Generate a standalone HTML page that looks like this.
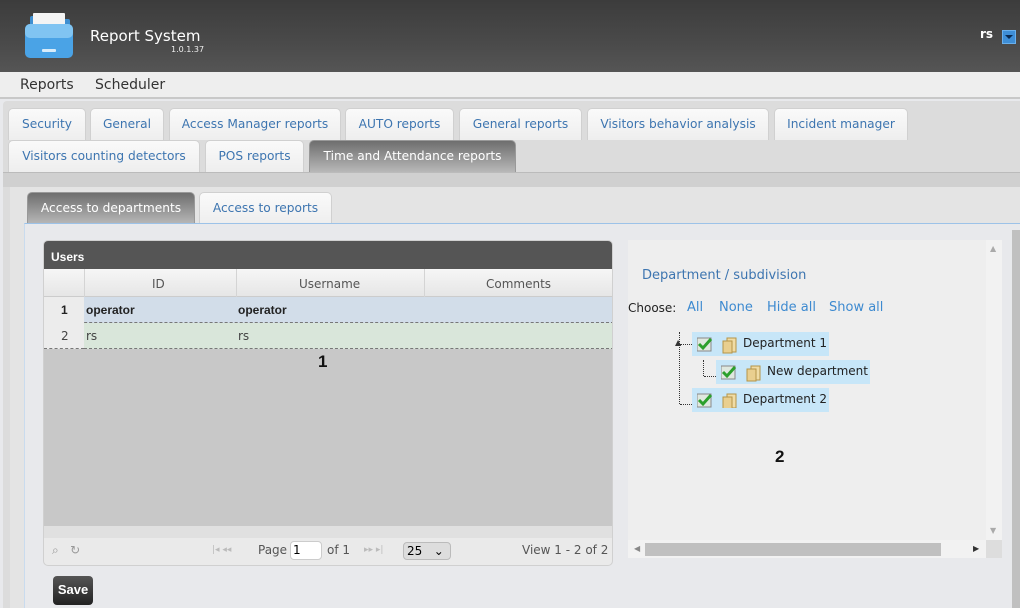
<!DOCTYPE html>
<html><head><meta charset="utf-8"><style>
*{box-sizing:border-box;margin:0;padding:0}
body{width:1020px;height:608px;overflow:hidden;font-family:"DejaVu Sans","Liberation Sans",sans-serif;background:#e8e9ec;position:relative}
.a{position:absolute}
.hdr{left:0;top:0;width:1020px;height:72px;background:linear-gradient(#3c3c3c,#4a4a4a 60%,#555)}
.menu{left:0;top:72px;width:1020px;height:27px;background:#eeeeee;border-bottom:2px solid #c8c8c8;font-size:14px;color:#333}
.tabarea{left:3px;top:101px;width:1017px;height:507px;background:#dcdcdc;border-radius:4px 0 0 0}
.tab{position:absolute;height:32px;background:linear-gradient(#fafafa,#eeeeee);border:1px solid #d0d0d0;border-bottom:none;border-radius:5px 5px 0 0;color:#3d75b0;font-size:12.2px;line-height:31px;text-align:center;white-space:nowrap}
.tab.sel{background:linear-gradient(#6e6e6e,#b8b8b8);color:#fff;border-color:#999}
.band{left:3px;top:172px;width:1017px;height:15px;background:#d0d0d0;border-top:1px solid #bbb}
.inner{left:10px;top:187px;width:1010px;height:421px;background:#e4e4e4}
.content{left:24px;top:223px;width:996px;height:385px;background:#e8e9ec;border-top:1px solid #9cc2e8;border-left:1px solid #c9dbee}
.t{position:absolute;font-size:12px;color:#222;white-space:nowrap}
</style></head><body>
<div class="a hdr"></div>
<svg class="a" style="left:24px;top:12px" width="50" height="48"><path d="M6 12 L6 6 Q6 4 8 4 L20 4 L22 7 L44 7 Q46 7 46 9 L46 14Z" fill="#3f8fd0"/><rect x="9" y="1" width="32" height="13" fill="#f4f4f4" rx="1"/><rect x="1" y="12" width="48" height="34" rx="5" fill="#4aa3e6"/><rect x="1" y="12" width="48" height="14" rx="5" fill="#80c4f2"/><rect x="18" y="37" width="14" height="3" rx="1" fill="#d8ecfa"/></svg>
<div class="t" style="left:90px;top:27px;font-size:15px;color:#fff">Report System</div>
<div class="t" style="left:171px;top:45px;font-size:8px;color:#eee">1.0.1.37</div>
<div class="t" style="left:980px;top:27px;font-size:12px;color:#fff;font-weight:bold">rs</div>
<div class="a" style="left:1002px;top:30px;width:14px;height:14px;background:#3e8ed6;border:1px solid #6ab0ec"></div>
<div class="a" style="left:1005px;top:35px;width:0;height:0;border:4px solid transparent;border-top:4px solid #0a2a50"></div>
<div class="a menu"><span class="a" style="left:20px;top:5px">Reports</span><span class="a" style="left:95px;top:5px">Scheduler</span></div>
<div class="a tabarea"></div>
<div class="tab" style="left:8px;top:108px;width:78px">Security</div>
<div class="tab" style="left:90px;top:108px;width:74px">General</div>
<div class="tab" style="left:169px;top:108px;width:172px">Access Manager reports</div>
<div class="tab" style="left:345px;top:108px;width:109px">AUTO reports</div>
<div class="tab" style="left:459px;top:108px;width:123px">General reports</div>
<div class="tab" style="left:587px;top:108px;width:182px">Visitors behavior analysis</div>
<div class="tab" style="left:774px;top:108px;width:134px">Incident manager</div>
<div class="tab" style="left:8px;top:140px;width:192px">Visitors counting detectors</div>
<div class="tab" style="left:205px;top:140px;width:99px">POS reports</div>
<div class="tab sel" style="left:309px;top:140px;width:207px">Time and Attendance reports</div>
<div class="a band"></div>
<div class="a inner"></div>
<div class="tab sel" style="left:27px;top:192px;width:168px">Access to departments</div>
<div class="tab" style="left:199px;top:192px;width:133px">Access to reports</div>
<div class="a content"></div>
<div class="a" style="left:1012px;top:230px;width:8px;height:378px;background:#c0c0c0"></div>
<!-- grid -->
<div class="a" style="left:43px;top:240px;width:570px;height:326px;background:#eaeaea;border:1px solid #d0d0d0;border-radius:5px;overflow:hidden">
 <div class="a" style="left:0;top:0;width:570px;height:28px;background:#555"></div>
 <div class="t" style="left:7px;top:9px;color:#fff;font-weight:bold;font-family:'Liberation Sans',sans-serif">Users</div>
 <div class="a" style="left:0;top:28px;width:570px;height:28px;background:linear-gradient(#f6f6f6,#e6e6e6);border-bottom:1px solid #ccc"></div>
 <div class="a" style="left:40px;top:28px;width:1px;height:28px;background:#d4d4d4"></div>
 <div class="a" style="left:192px;top:28px;width:1px;height:28px;background:#d4d4d4"></div>
 <div class="a" style="left:380px;top:28px;width:1px;height:28px;background:#d4d4d4"></div>
 <div class="t" style="left:108px;top:36px;color:#555">ID</div>
 <div class="t" style="left:255px;top:36px;color:#555">Username</div>
 <div class="t" style="left:442px;top:36px;color:#555">Comments</div>
 <div class="a" style="left:0;top:56px;width:570px;height:26px;background:#d2dde9;border-bottom:1px dashed #777"></div>
 <div class="a" style="left:0;top:56px;width:40px;height:52px;background:#ececec"></div>
 <div class="a" style="left:40px;top:82px;width:530px;height:26px;background:#d9e6da;border-bottom:1px dashed #777"></div>
 <div class="a" style="left:0;top:82px;width:40px;height:26px;border-bottom:1px dashed #777"></div>
 <div class="t" style="left:17px;top:62px;font-weight:bold;font-family:'Liberation Sans',sans-serif">1</div>
 <div class="t" style="left:42px;top:62px;font-weight:bold;font-family:'Liberation Sans',sans-serif">operator</div>
 <div class="t" style="left:194px;top:62px;font-weight:bold;font-family:'Liberation Sans',sans-serif">operator</div>
 <div class="t" style="left:17px;top:88px;color:#444">2</div>
 <div class="t" style="left:42px;top:88px;color:#444">rs</div>
 <div class="t" style="left:194px;top:88px;color:#444">rs</div>
 <div class="a" style="left:0;top:108px;width:570px;height:177px;background:#c8c8c8"></div>
 <div class="t" style="left:274px;top:111px;font-size:17px;font-weight:bold;color:#111;font-family:'Liberation Sans',sans-serif">1</div>
 <div class="a" style="left:0;top:285px;width:570px;height:12px;background:#e0e0e0"></div>
 <div class="t" style="left:8px;top:302px;color:#999">⌕ &nbsp; ↻</div>
 <div class="t" style="left:168px;top:304px;color:#bbb;font-size:9px">|◂ ◂◂</div>
 <div class="t" style="left:214px;top:302px;color:#555">Page</div>
 <div class="a" style="left:246px;top:300px;width:32px;height:19px;background:#fff;border:1px solid #ccc;border-radius:4px;font-size:12px;padding-left:2px;line-height:17px">1</div>
 <div class="t" style="left:283px;top:302px;color:#555">of 1</div>
 <div class="t" style="left:320px;top:304px;color:#bbb;font-size:9px">▸▸ ▸|</div>
 <div class="a" style="left:359px;top:301px;width:48px;height:18px;background:#ddd;border:1px solid #bbb;border-radius:4px;font-size:12px;padding-left:3px;line-height:16px">25 &nbsp;&nbsp;⌄</div>
 <div class="t" style="left:478px;top:302px;color:#555">View 1 - 2 of 2</div>
</div>
<div class="a" style="left:53px;top:576px;width:40px;height:29px;background:linear-gradient(#555,#222);border-radius:4px;color:#fff;font-weight:bold;font-size:13px;text-align:center;line-height:28px;font-family:'Liberation Sans',sans-serif">Save</div>
<!-- right panel -->
<div class="a" style="left:628px;top:240px;width:374px;height:318px;background:#eeeeee"></div>
<div class="a" style="left:986px;top:240px;width:16px;height:300px;background:#f2f2f2"></div>
<div class="t" style="left:990px;top:244px;font-size:8px;color:#aaa">▲</div>
<div class="t" style="left:990px;top:526px;font-size:8px;color:#aaa">▼</div>
<div class="a" style="left:628px;top:540px;width:358px;height:18px;background:#f2f2f2"></div>
<div class="a" style="left:645px;top:543px;width:296px;height:13px;background:#c0c0c0"></div>
<div class="a" style="left:986px;top:540px;width:16px;height:18px;background:#ddd"></div>
<div class="t" style="left:634px;top:544px;font-size:8px;color:#888">◀</div>
<div class="t" style="left:973px;top:544px;font-size:8px;color:#333">▶</div>
<div class="t" style="left:642px;top:268px;font-size:13px;color:#3d75b0">Department / subdivision</div>
<div class="t" style="left:628px;top:301px;color:#222">Choose:</div>
<div class="t" style="left:687px;top:300px;font-size:13px;color:#3d8ad0">All</div>
<div class="t" style="left:719px;top:300px;font-size:13px;color:#3d8ad0">None</div>
<div class="t" style="left:767px;top:300px;font-size:13px;color:#3d8ad0">Hide all</div>
<div class="t" style="left:829px;top:300px;font-size:13px;color:#3d8ad0">Show all</div>
<div class="a" style="left:679px;top:332px;width:1px;height:72px;border-left:1px dotted #333"></div>
<div class="a" style="left:680px;top:344px;width:12px;border-top:1px dotted #333"></div>
<div class="a" style="left:680px;top:404px;width:12px;border-top:1px dotted #333"></div>
<div class="a" style="left:703px;top:360px;width:1px;height:16px;border-left:1px dotted #333"></div>
<div class="a" style="left:704px;top:376px;width:12px;border-top:1px dotted #333"></div>
<div class="t" style="left:675px;top:338px;font-size:8px;color:#333">▲</div>
<div class="a" style="left:692px;top:332px;width:137px;height:24px;background:#c7e6f8"></div>
<div class="a" style="left:716px;top:360px;width:154px;height:24px;background:#c7e6f8"></div>
<div class="a" style="left:692px;top:388px;width:137px;height:24px;background:#c7e6f8"></div>
<svg class="a" style="left:697px;top:336px" width="40" height="72"><g id="ck"><rect x="0" y="2" width="14" height="13" fill="#dfe8df" stroke="#888"/><path d="M2 8l4 4 8-9" stroke="#2ca02c" stroke-width="3" fill="none"/><rect x="30" y="2" width="9" height="14" fill="#f0dca5" stroke="#b59448"/><rect x="26" y="5" width="9" height="12" fill="#e9cf8f" stroke="#b59448"/></g><use href="#ck" y="56"/></svg>
<svg class="a" style="left:721px;top:364px" width="40" height="18"><rect x="0" y="2" width="14" height="13" fill="#dfe8df" stroke="#888"/><path d="M2 8l4 4 8-9" stroke="#2ca02c" stroke-width="3" fill="none"/><rect x="30" y="2" width="9" height="14" fill="#f0dca5" stroke="#b59448"/><rect x="26" y="5" width="9" height="12" fill="#e9cf8f" stroke="#b59448"/></svg>
<div class="t" style="left:743px;top:336px">Department 1</div>
<div class="t" style="left:767px;top:364px">New department</div>
<div class="t" style="left:743px;top:392px">Department 2</div>
<div class="t" style="left:775px;top:447px;font-size:17px;font-weight:bold;color:#111;font-family:'Liberation Sans',sans-serif">2</div>
</body></html>
